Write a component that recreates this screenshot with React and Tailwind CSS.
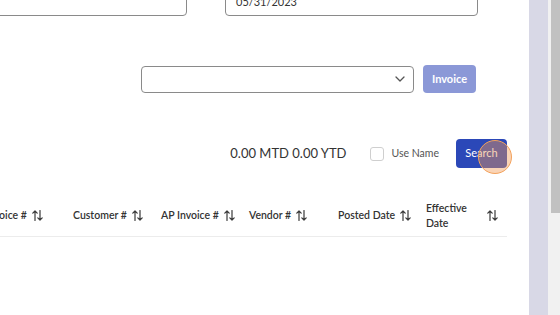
import React from "react";

function SortIcon() {
  return (
    <svg width="11" height="11" viewBox="0 0 11 11" fill="none" stroke="#3a3a3a" strokeWidth="1.2" strokeLinecap="round" strokeLinejoin="round">
      <path d="M3 10.5V1M0.8 3.2L3 1L5.2 3.2" />
      <path d="M8 0.5V10M5.8 7.8L8 10L10.2 7.8" />
    </svg>
  );
}

function Header({ children, last }) {
  if (last) {
    return (
      <div className="flex items-center justify-between pr-[9px]">
        <span className="leading-[15px] w-[50px]">{children}</span>
        <SortIcon />
      </div>
    );
  }
  return (
    <div className="flex items-center gap-[5px] whitespace-nowrap">
      <span>{children}</span>
      <SortIcon />
    </div>
  );
}

export default function App() {
  return (
    <div className="flex w-[560px] h-[315px] overflow-hidden bg-white" style={{ fontFamily: 'Lato, "Open Sans", sans-serif' }}>
      <div className="w-[529px] h-full relative overflow-hidden bg-white">
        <div className="flex mt-[-14px] ml-[-10px]">
          <div className="w-[197px] h-[30px] border border-[#8a8a8a] rounded-[4px]" />
          <div className="ml-[38px] w-[253px] h-[30px] border border-[#8a8a8a] rounded-[4px] flex items-center px-[10px] text-[11px] text-[#333] pt-[2px]">
            05/31/2023
          </div>
        </div>

        <div className="flex mt-[49px] ml-[141px] items-center">
          <div className="w-[273px] h-[27px] border border-[#8a8a8a] rounded-[4px] flex items-center justify-end pr-[8px]">
            <svg width="10" height="6" viewBox="0 0 10 6" fill="none" stroke="#555" strokeWidth="1.3" strokeLinecap="round" strokeLinejoin="round">
              <path d="M1 1L5 5L9 1" />
            </svg>
          </div>
          <div className="ml-[9px] w-[53px] h-[28px] rounded-[4px] bg-[#8b98d7] text-white text-[11px] font-bold flex items-center justify-center">
            Invoice
          </div>
        </div>

        <div className="flex items-center justify-end mt-[46px] w-[507px]">
          <span className="text-[13px] text-[#333] leading-none">0.00 MTD 0.00 YTD</span>
          <div className="ml-[24px] w-[14px] h-[14px] border border-[#cfcfcf] rounded-[3px]" />
          <span className="ml-[7px] text-[10.5px] text-[#555]">Use Name</span>
          <div className="relative ml-[17px] w-[51px] h-[29px] rounded-[4px] bg-[#2b48b8] text-white text-[11px] flex items-center justify-center">
            Search
            <div className="absolute left-[22px] top-[1px] w-[34px] h-[34px] rounded-full border-[1.5px] border-[#f3a25c] bg-[rgba(243,152,82,0.42)]" />
          </div>
        </div>

        <div className="mt-[27px] ml-[-15px] w-[522px] border-b border-[#ececec] grid grid-cols-[88px_88px_88px_89px_88px_81px] h-[42px] items-center text-[10.5px] font-semibold text-[#333]">
          <Header>Invoice #</Header>
          <Header>Customer #</Header>
          <Header>AP Invoice #</Header>
          <Header>Vendor #</Header>
          <Header>Posted Date</Header>
          <Header last>Effective Date</Header>
        </div>
      </div>
      <div className="w-[19px] h-full bg-[#d8d8e6]" />
      <div className="w-[12px] h-full bg-[#f1f1f1] flex justify-center">
        <div className="w-[9px] h-[213px] bg-[#c1c1c1] ml-[2px]" />
      </div>
    </div>
  );
}
